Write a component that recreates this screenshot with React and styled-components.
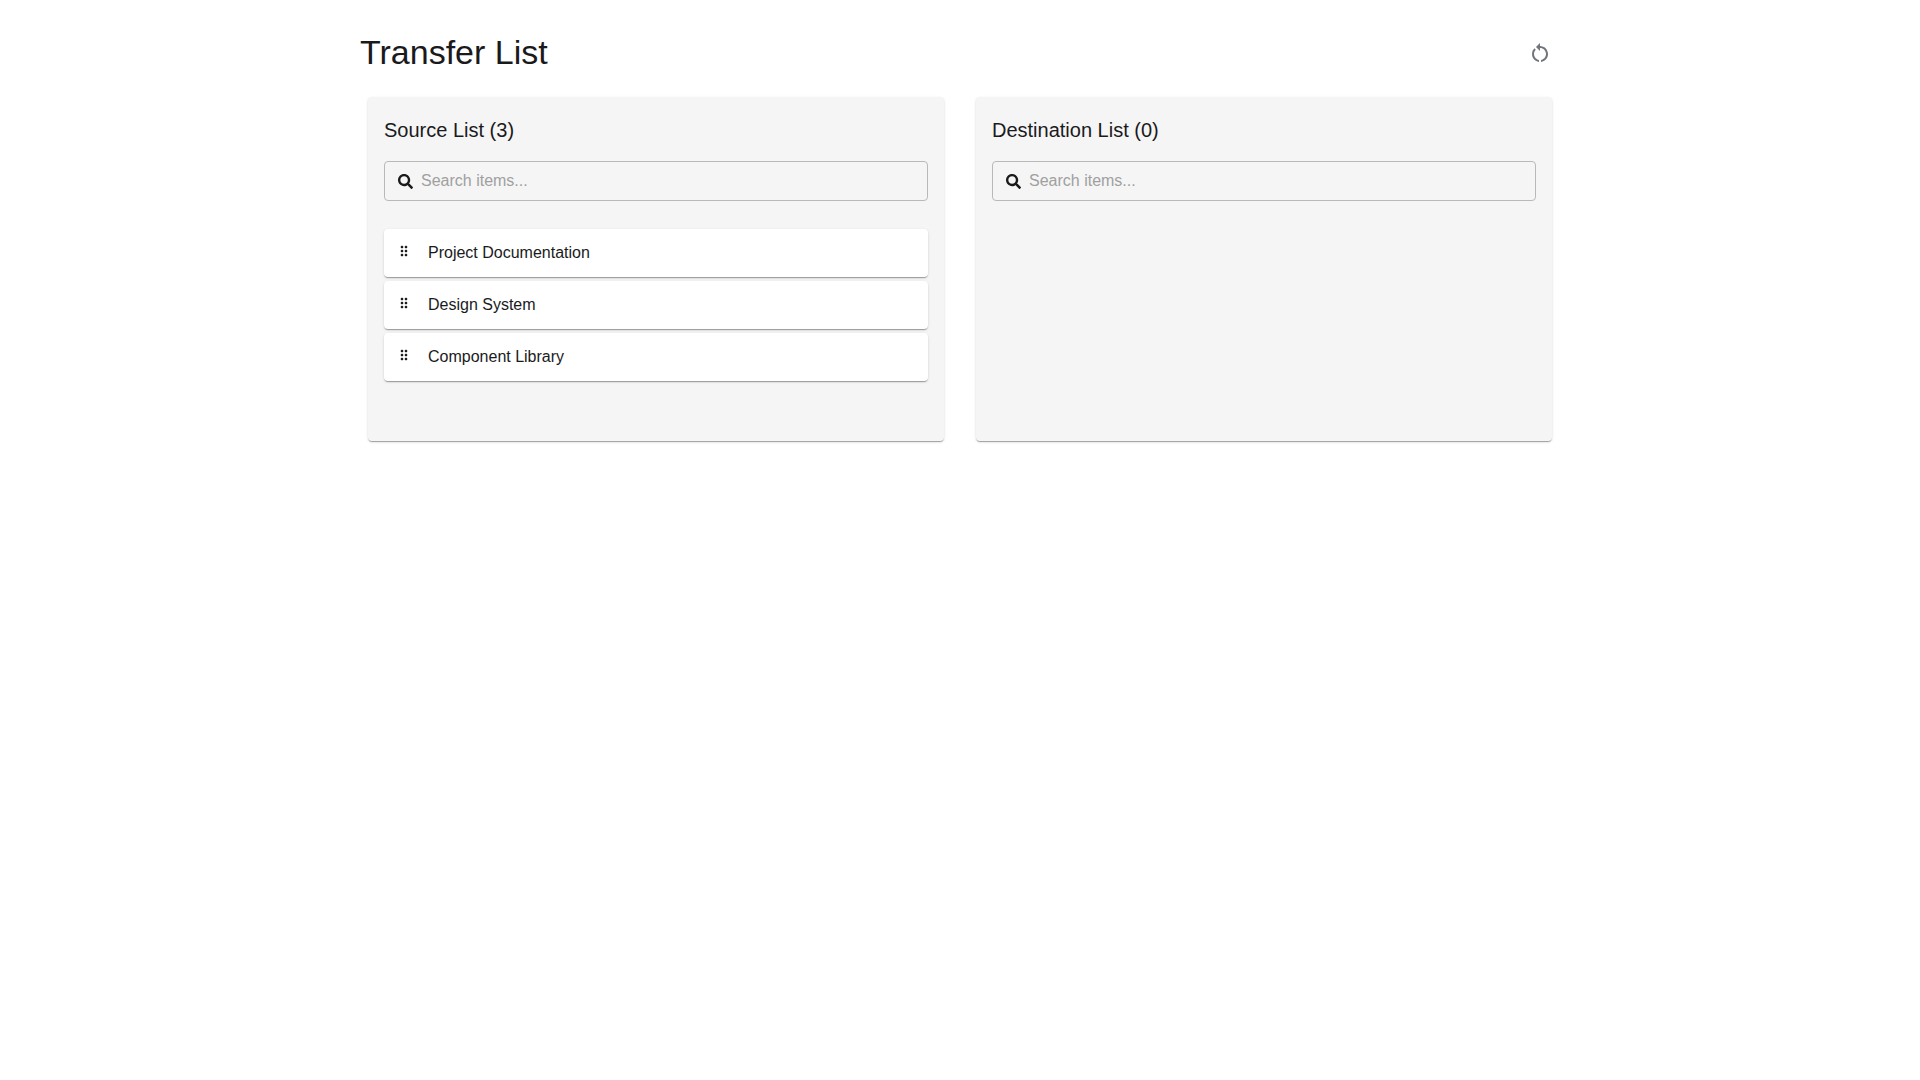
import React, { useState } from 'react'
import styled, { createGlobalStyle } from 'styled-components';
import { FaSearch } from 'react-icons/fa';
import { MdDragIndicator, MdRestartAlt } from 'react-icons/md';

const GlobalStyle = createGlobalStyle`
  * {
    box-sizing: border-box;
  }

  body {
    margin: 0;
    background-color: #fff;
    color: #1a1a1c;
    font-family: "Liberation Sans", Arial, sans-serif;
    font-size: 16px;
    line-height: 24px;
  }
`

const MainContainer = styled.main`
  max-width: 1200px;
  margin: 0 auto;
  padding: 32px 0;
`

const Header = styled.header`
  display: flex;
  justify-content: space-between;
  align-items: center;
  margin-bottom: 16px;
`

const Title = styled.h1`
  margin: 0;
  font-size: 34px;
  font-weight: 400;
  line-height: 41px;
`

const ResetButton = styled.button`
  display: flex;
  padding: 8px;
  border: none;
  border-radius: 50%;
  background: transparent;
  color: #70747b;
  font-size: 24px;
  &:hover {
    cursor: pointer;
    background-color: rgba(0, 0, 0, 0.04);
  }
`

const Lists = styled.div`
  display: grid;
  grid-template-columns: 1fr 1fr;
  gap: 32px;
  padding: 8px;
`

const Paper = styled.div`
  border-radius: 4px;
  box-shadow: 0 2px 1px -1px rgba(0, 0, 0, 0.2), 0 1px 1px 0 rgba(0, 0, 0, 0.14),
    0 1px 3px 0 rgba(0, 0, 0, 0.12);
`

const Panel = styled(Paper).attrs({ as: 'section' })`
  padding: 16px;
  background-color: #f5f5f5;
`

const PanelTitle = styled.h2`
  margin: 0 0 14px;
  font-size: 20px;
  font-weight: 400;
  line-height: 34px;
`

const SearchBox = styled.label`
  display: flex;
  align-items: center;
  gap: 8px;
  height: 40px;
  margin-bottom: 24px;
  padding: 0 13px;
  border: 1px solid #b9b9b9;
  border-radius: 4px;
  &:focus-within {
    border-color: #1976d2;
  }
`

const SearchInput = styled.input`
  flex: 1;
  min-width: 0;
  padding: 0;
  border: none;
  outline: none;
  background: transparent;
  color: inherit;
  font: inherit;
  &::placeholder {
    color: #a0a0a0;
    opacity: 1;
  }
`

const ItemList = styled.ul`
  display: flex;
  flex-direction: column;
  gap: 4px;
  min-height: 200px;
  margin: 0;
  padding: 4px 0;
  list-style: none;
`

const Item = styled(Paper).attrs({ as: 'li' })`
  display: flex;
  align-items: center;
  gap: 16px;
  padding: 12px;
  background-color: #fff;
  cursor: grab;
`

const Handle = styled.span`
  display: flex;
  padding-bottom: 4px;
`

const initialItems = {
  source: ['Project Documentation', 'Design System', 'Component Library'],
  destination: [],
}

function TransferPanel({ title, items, onDropItem }) {
  const [search, setSearch] = useState('')
  const visible = items.filter((item) => item.toLowerCase().includes(search.toLowerCase()))

  function handleDrop(e) {
    e.preventDefault()
    onDropItem(e.dataTransfer.getData('text/plain'))
  }

  return (
    <Panel onDragOver={(e) => e.preventDefault()} onDrop={handleDrop}>
      <PanelTitle>{title} ({items.length})</PanelTitle>
      <SearchBox>
        <FaSearch size={15} />
        <SearchInput
          type="text"
          aria-label={`Search ${title}`}
          placeholder="Search items..."
          value={search}
          onChange={(e) => setSearch(e.target.value)}
        />
      </SearchBox>
      <ItemList>
        {visible.map((item) => (
          <Item
            key={item}
            draggable
            onDragStart={(e) => e.dataTransfer.setData('text/plain', item)}
          >
            <Handle><MdDragIndicator /></Handle>
            <span>{item}</span>
          </Item>
        ))}
      </ItemList>
    </Panel>
  )
}

export default function App() {
  const [items, setItems] = useState(initialItems)

  function moveItem(item, from, to) {
    if (!items[from].includes(item)) return
    setItems({
      [from]: items[from].filter((i) => i !== item),
      [to]: [...items[to], item],
    })
  }

  return (
    <>
      <GlobalStyle />
      <MainContainer>
        <Header>
          <Title>Transfer List</Title>
          <ResetButton type="button" aria-label="Reset lists" onClick={() => setItems(initialItems)}>
            <MdRestartAlt />
          </ResetButton>
        </Header>
        <Lists>
          <TransferPanel
            title="Source List"
            items={items.source}
            onDropItem={(item) => moveItem(item, 'destination', 'source')}
          />
          <TransferPanel
            title="Destination List"
            items={items.destination}
            onDropItem={(item) => moveItem(item, 'source', 'destination')}
          />
        </Lists>
      </MainContainer>
    </>
  )
}
